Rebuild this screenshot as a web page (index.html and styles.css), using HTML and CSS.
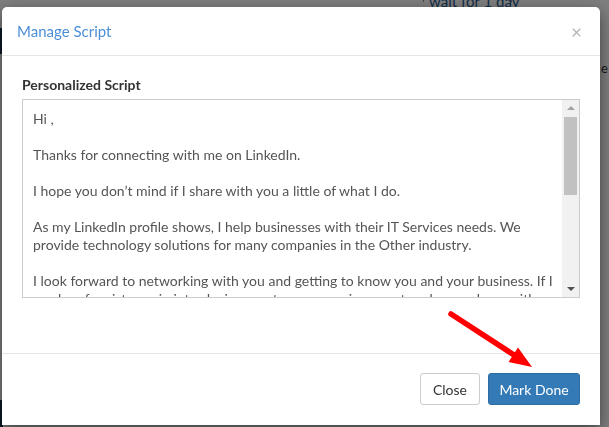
FILE: index.html
```html
<html>
<head>
<title>Manage Script</title>
<link rel="stylesheet" href="styles.css">
</head>
<body>

  <div class="page">
    <div class="side">
      <div class="side-gap1"></div>
      <div class="side-nav"></div>
      <div class="side-gap2"></div>
      <div class="side-nav2"></div>
    </div>
    <div class="content">
      <div class="row">
        <div class="cell"><span>wait for 1 day</span></div>
      </div>
      <div class="row2"><span>e</span></div>
    </div>
  </div>

  <div class="backdrop"></div>

  <div class="modal">
    <div class="modal-header">
      <h4 class="modal-title">Manage Script</h4>
      <span class="close">&times;</span>
    </div>
    <div class="modal-body">
      <label class="label">Personalized Script</label>
      <div class="script-box">
        <textarea class="script" spellcheck="false">Hi ,

Thanks for connecting with me on LinkedIn.

I hope you don’t mind if I share with you a little of what I do.

As my LinkedIn profile shows, I help businesses with their IT Services needs. We provide technology solutions for many companies in the Other industry.

I look forward to networking with you and getting to know you and your business. If I can be of assistance in introducing you to someone in my network or perhaps with any of your IT needs, please let me know.</textarea>
        <div class="scrollbar">
          <div class="arrow-up"></div>
          <div class="track"><div class="thumb"></div></div>
          <div class="arrow-down"></div>
        </div>
      </div>
    </div>
    <div class="modal-footer">
      <button class="btn btn-default">Close</button>
      <button class="btn btn-primary">Mark Done</button>
    </div>

    <!-- red arrow pointing at the button -->
    <svg class="pointer" width="120" height="80" viewBox="440 300 120 80">
      <line x1="451" y1="314" x2="514" y2="355" stroke="#ff0000" stroke-width="5.5" stroke-linecap="round"/>
      <polygon points="532,367 518,347.5 508.5,362" fill="#ff0000"/>
    </svg>
  </div>

</body>
</html>
```

FILE: styles.css
```css
body {
  margin: 0;
  background: #fff;
  font-family: Lato, "Open Sans", sans-serif;
  font-size: 14px;
  color: #333;
  overflow: hidden;
}

/* page behind the dialog */
.page {
  display: flex;
  height: 427px;
}
.side {
  width: 3px;
  display: flex;
  flex-direction: column;
}
.side-gap1 { height: 28px; }
.side-nav { height: 26px; background: #16354f; }
.side-gap2 { height: 346px; }
.side-nav2 { height: 27px; background: #16354f; }
.content { flex: 1; }
.row {
  height: 8px;
  overflow: hidden;
  padding-left: 420px;
}
.cell {
  width: 82px;
  height: 8px;
  border-left: 1px solid #888;
  border-right: 1px solid #888;
  color: #2a5a92;
  font-size: 15px;
  line-height: 14px;
  padding-left: 5px;
  white-space: nowrap;
}
.cell span {
  display: block;
  margin-top: -6px;
}
.row2 {
  padding: 52px 0 0 598px;
  color: #333;
  font-size: 13px;
}

.backdrop {
  position: fixed;
  left: 0;
  top: 0;
  right: 0;
  bottom: 0;
  background: rgba(0, 0, 0, 0.5);
}

/* dialog */
.modal {
  position: absolute;
  left: 2px;
  top: 7px;
  width: 598px;
  background: #fff;
  border-radius: 5px 5px 0 0;
  box-shadow: 0 5px 15px rgba(0, 0, 0, 0.5);
}
.modal-header {
  display: flex;
  align-items: center;
  justify-content: space-between;
  height: 48px;
  padding: 0 15px;
  border-bottom: 1px solid #e5e5e5;
}
.modal-title {
  margin: 0;
  font-weight: normal;
  font-size: 15px;
  color: #4d8fd6;
}
.close {
  font-size: 19px;
  color: #b5b5b5;
  margin-right: 3px;
  margin-top: 1px;
}
.modal-body {
  padding: 19px 20px 55px;
}
.label {
  display: block;
  font-weight: bold;
  font-size: 14px;
  line-height: 20px;
  margin-bottom: 4px;
  color: #333;
}
.script-box {
  display: flex;
  height: 197px;
  border: 1px solid #ccc;
}
.script {
  flex: 1;
  border: none;
  outline: none;
  resize: none;
  overflow: hidden;
  padding: 10px 2px 0 10px;
  font-family: Lato, "Open Sans", sans-serif;
  font-size: 14px;
  line-height: 18px;
  color: #555;
}
.scrollbar {
  width: 17px;
  background: #f1f1f1;
  display: flex;
  flex-direction: column;
  align-items: center;
}
.arrow-up {
  margin-top: 6px;
  width: 0;
  height: 0;
  border-left: 4px solid transparent;
  border-right: 4px solid transparent;
  border-bottom: 4px solid #a3a3a3;
}
.track {
  flex: 1;
  width: 13px;
  padding-top: 7px;
}
.thumb {
  height: 78px;
  background: #c1c1c1;
}
.arrow-down {
  margin-bottom: 6px;
  width: 0;
  height: 0;
  border-left: 4px solid transparent;
  border-right: 4px solid transparent;
  border-top: 4px solid #505050;
}
.modal-footer {
  display: flex;
  justify-content: flex-end;
  gap: 8px;
  padding: 19px 20px 20px;
  border-top: 1px solid #e5e5e5;
}
.btn {
  height: 32px;
  padding: 0;
  font-family: Lato, "Open Sans", sans-serif;
  font-size: 14px;
  white-space: nowrap;
  border-radius: 3px;
  border: 1px solid #ccc;
}
.btn-default {
  width: 60px;
  background: #fff;
  color: #333;
}
.btn-primary {
  width: 92px;
  background: #337ab7;
  border-color: #2e6da4;
  color: #fff;
}
.pointer {
  position: absolute;
  left: 438px;
  top: 293px;
}
```
